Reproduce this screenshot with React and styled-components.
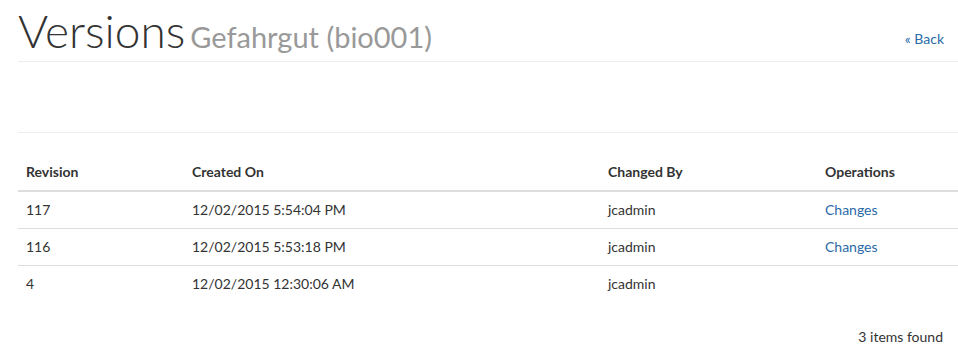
import React from 'react';
import styled, { createGlobalStyle } from 'styled-components';

const GlobalStyle = createGlobalStyle`
	html, body {
		margin: 0;
		padding: 0;
		background: #fff;
	}
	body {
		font-family: Lato, "Open Sans", Arial, sans-serif;
		font-size: 14px;
		color: #333;
	}
`

const Page = styled.div`
	width: 940px;
	padding-left: 18px;
`

const Header = styled.div`
	display: flex;
	align-items: flex-end;
	justify-content: space-between;
	height: 62px;
	border-bottom: 1px solid #eee;
	box-sizing: border-box;
`

const Title = styled.h1`
	margin: 0 0 7px;
	font-size: 46px;
	font-weight: 300;
	line-height: 1;
	color: #333;
	small {
		font-size: 29px;
		font-weight: 400;
		color: #999;
		margin-left: 5px;
	}
`

const BackLink = styled.a`
	color: #2a6aa8;
	text-decoration: none;
	font-size: 14px;
	margin: 0 14px 14px 0;
`

const Spacer = styled.div`
	height: 70px;
	border-bottom: 1px solid #eee;
`

const Table = styled.table`
	width: 100%;
	table-layout: fixed;
	margin-top: 21px;
	border-collapse: collapse;
	th, td {
		text-align: left;
		padding: 10px 8px;
		line-height: 16px;
	}
	th {
		font-weight: 700;
		border-bottom: 2px solid #ddd;
	}
	td {
		border-top: 1px solid #ddd;
	}
	tbody tr:first-child td {
		border-top: none;
	}
`

const Col = styled.th`
	width: ${p => p.$w ? `${p.$w}px` : 'auto'};
`

const OpLink = styled.a`
	color: #2a6aa8;
	text-decoration: none;
`

const Footer = styled.div`
	text-align: right;
	padding: 26px 15px 0 0;
`

const rows = [
	{ rev: '117', created: '12/02/2015 5:54:04 PM', by: 'jcadmin', op: true },
	{ rev: '116', created: '12/02/2015 5:53:18 PM', by: 'jcadmin', op: true },
	{ rev: '4', created: '12/02/2015 12:30:06 AM', by: 'jcadmin', op: false },
]

const App = () => {
	return (
		<Page>
			<GlobalStyle />
			<Header>
				<Title>Versions<small>Gefahrgut (bio001)</small></Title>
				<BackLink href="#">« Back</BackLink>
			</Header>
			<Spacer />
			<Table>
				<thead>
					<tr>
						<Col $w={150}>Revision</Col>
						<Col $w={400}>Created On</Col>
						<Col $w={201}>Changed By</Col>
						<Col>Operations</Col>
					</tr>
				</thead>
				<tbody>
					{rows.map(r =>
						<tr key={r.rev}>
							<td>{r.rev}</td>
							<td>{r.created}</td>
							<td>{r.by}</td>
							<td>{r.op && <OpLink href="#">Changes</OpLink>}</td>
						</tr>
					)}
				</tbody>
			</Table>
			<Footer>3 items found</Footer>
		</Page>
	);
}

export default App;
